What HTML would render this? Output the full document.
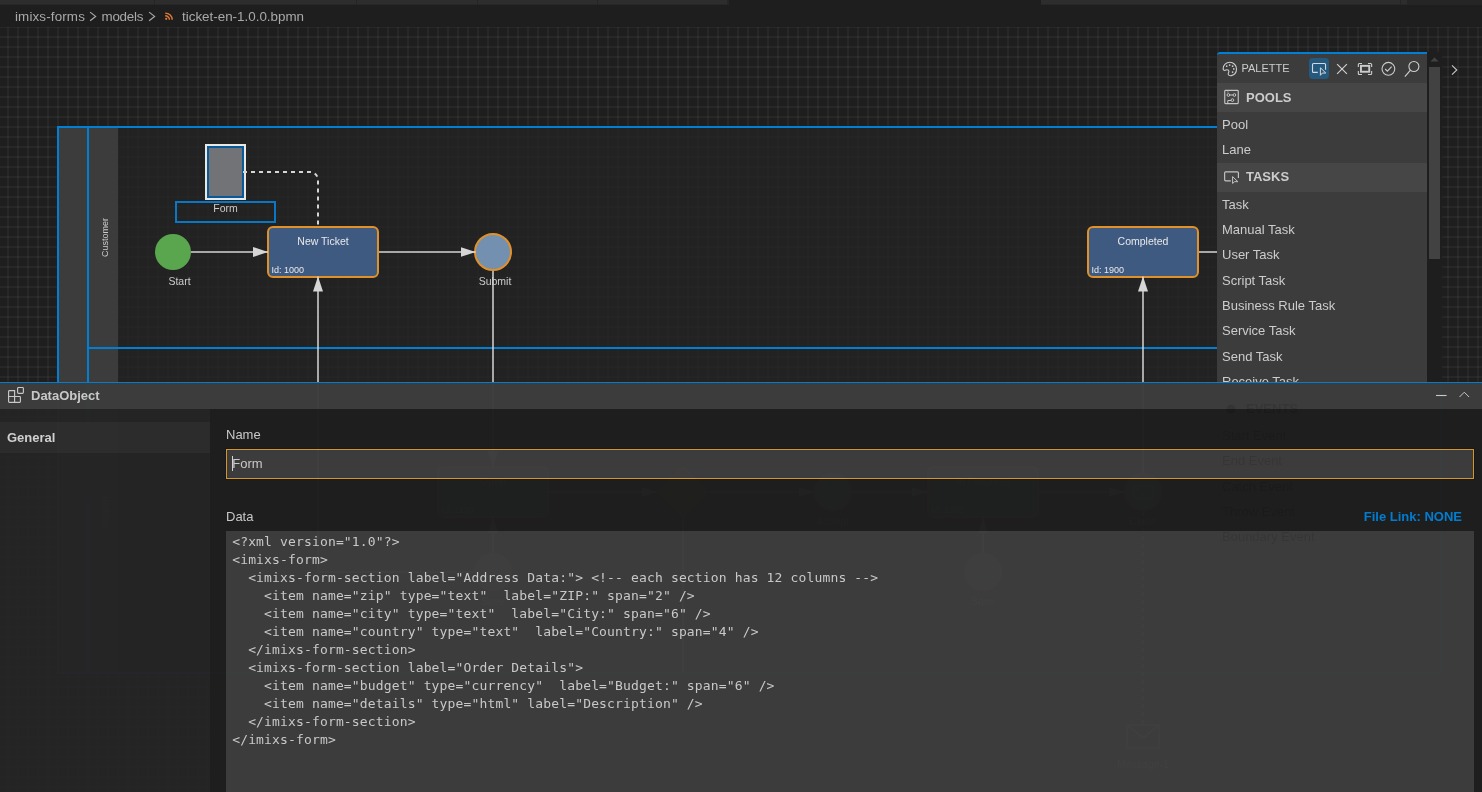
<!DOCTYPE html>
<html lang="en">
<head>
<meta charset="utf-8">
<title>ticket-en-1.0.0.bpmn</title>
<style>
html,body{margin:0;padding:0;}
body{width:1482px;height:792px;overflow:hidden;background:#1e1e1e;position:relative;font-family:"Liberation Sans",sans-serif;color:#cccccc;}
#root{position:absolute;left:0;top:0;width:1482px;height:792px;will-change:transform;}
.abs{position:absolute;}
/* top strip + breadcrumb */
#tabs{left:0;top:0;width:1482px;height:5px;background:linear-gradient(to bottom,#2d2d2d 4px,#272727 4px);}
#tabs i{position:absolute;top:0;height:5px;display:block;}
#crumbs{left:0;top:5px;width:1482px;height:22px;background:#1e1e1e;font-size:13.4px;color:#a9a9a9;white-space:nowrap;}
#crumbs span{position:absolute;top:1px;line-height:22px;}
/* canvas */
#canvas{left:0;top:27px;width:1482px;height:765px;overflow:hidden;background-color:#1e1e1e;
background-image:linear-gradient(to right,rgba(255,255,255,0.04) 2px,transparent 2px),linear-gradient(to bottom,rgba(255,255,255,0.04) 2px,transparent 2px);
background-size:10px 10px,10px 10px;background-position:7px 0px,0px -1px;}
#diagram{left:0;top:-27px;width:1482px;height:792px;}
/* palette */
#palette{left:1217px;top:52px;width:210px;height:330px;background:#3c3c3c;border-top:2px solid #007fd4;border-radius:3px 0 0 0;font-size:13px;color:#cccccc;overflow:hidden;}
#palette .hdr{height:29px;position:relative;}
#palette .grp{height:29px;background:#464646;position:relative;font-weight:bold;}
#palette .grp span{position:absolute;left:29px;top:0;line-height:30px;}
#palette .it{padding:6.02px 0 4.38px 5px;line-height:14.94px;height:14.94px;white-space:nowrap;}
#pghost{left:1217px;top:394.125px;width:210px;font-size:13px;color:#000;opacity:0.1;}
#pghost .grp{height:29px;position:relative;font-weight:bold;}
#pghost .grp span{position:absolute;left:29px;top:0;line-height:30px;}
#pghost .it{padding:6.02px 0 4.38px 5px;line-height:14.94px;height:14.94px;white-space:nowrap;}
#pscroll{left:1427px;top:52px;width:15px;height:330px;background:#1e1e1e;}
#pscroll .thumb{position:absolute;left:2px;top:15px;width:11px;height:192px;background:#424242;}
/* property panel */
#panel{left:0;top:382px;width:1482px;height:410px;background:#1e1e1e;opacity:0.98;border-top:1px solid #007fd4;box-sizing:border-box;}
#phead{left:0;top:0;width:1482px;height:26px;background:#3d3d3d;}
#phead .t{position:absolute;left:31px;top:0;line-height:25px;font-size:13px;font-weight:bold;color:#cccccc;}
#pside{left:0;top:26px;width:210px;height:383px;background:#252526;}
#ptab{left:0;top:39px;width:210px;height:31px;background:#2d2d2d;}
#ptab span{position:absolute;left:7px;top:0;line-height:32px;font-size:13px;font-weight:bold;color:#d4d4d4;}
.lbl{font-size:13px;color:#cccccc;line-height:15px;}
#inp{left:226px;top:66px;width:1248px;height:30px;box-sizing:border-box;border:1px solid #e09a12;background:#3d3d3d;box-shadow:0 0 0 1px rgba(8,16,40,0.4), inset 0 0 0 1px rgba(40,60,100,0.25);}
#inp span{position:absolute;left:5.3px;top:0;line-height:28px;font-size:13px;color:#cccccc;}
#ta{left:226px;top:148px;width:1248px;height:262px;background:#3d3d3d;overflow:hidden;}
#ta pre{margin:0;position:absolute;left:6.2px;top:2px;font-family:"DejaVu Sans Mono","Liberation Mono",monospace;font-size:13px;line-height:18px;color:#cccccc;letter-spacing:0.15px;}
#flink{right:20px;top:126px;font-size:13px;font-weight:bold;color:#007fd4;line-height:15px;}
</style>
</head>
<body>
<div id="root">
<!-- TOP -->
<div id="tabs" class="abs">
<i style="left:154px;width:1px;background:#252526"></i>
<i style="left:356px;width:1px;background:#252526"></i>
<i style="left:477px;width:1px;background:#252526"></i>
<i style="left:597px;width:1px;background:#252526"></i>
<i style="left:727px;width:2px;background:#252526"></i>
<i style="left:729px;width:312px;background:#1e1e1e"></i>
<i style="left:1400px;width:1px;background:#252526"></i>
<i style="left:1407px;width:75px;background:#252526"></i>
</div>
<div id="crumbs" class="abs">
<span style="left:15px;letter-spacing:0.14px">imixs-forms</span>
<span style="left:101.5px;letter-spacing:-0.25px">models</span>
<span style="left:182px">ticket-en-1.0.0.bpmn</span>
<svg class="abs" style="left:88px;top:5px" width="12" height="12" viewBox="0 0 12 12"><path d="M2.1 2.1 L7.6 6.4 L2.1 10.7" fill="none" stroke="#a9a9a9" stroke-width="1.2"/></svg>
<svg class="abs" style="left:147.1px;top:5px" width="12" height="12" viewBox="0 0 12 12"><path d="M2.1 2.1 L7.6 6.4 L2.1 10.7" fill="none" stroke="#a9a9a9" stroke-width="1.2"/></svg>
<svg class="abs" style="left:165px;top:7.4px" width="8.4" height="8" viewBox="0 0 9 9" preserveAspectRatio="none"><circle cx="1.3" cy="7.7" r="1.2" fill="#e37933"/><path d="M0.2 4.2 A4.6 4.6 0 0 1 4.8 8.8" fill="none" stroke="#e37933" stroke-width="1.5"/><path d="M0.2 1.2 A7.6 7.6 0 0 1 7.8 8.8" fill="none" stroke="#e37933" stroke-width="1.5"/></svg>
</div>

<!-- CANVAS -->
<div id="canvas" class="abs">
<svg id="diagram" class="abs" width="1482" height="792" viewBox="0 0 1482 792" font-family="Liberation Sans, sans-serif">
<defs>
<marker id="ah" markerWidth="16" markerHeight="12" refX="15" refY="5" orient="auto" markerUnits="userSpaceOnUse"><path d="M0 0 L15 5 L0 10 Z" fill="#d6d6d6"/></marker>
</defs>
<!-- pool -->
<rect x="59" y="128" width="1381" height="300" fill="#242424" fill-opacity="0.75"/>
<rect x="59" y="128" width="28" height="300" fill="#3c3c3c"/>
<rect x="89" y="128" width="29" height="300" fill="#3c3c3c"/>
<rect x="58" y="127" width="1383" height="546" fill="none" stroke="#007fd4" stroke-width="2"/>
<line x1="88" y1="127" x2="88" y2="500" stroke="#007fd4" stroke-width="2"/>
<line x1="88" y1="348" x2="1441" y2="348" stroke="#007fd4" stroke-width="2"/>
<text transform="translate(108,237.5) rotate(-90)" text-anchor="middle" font-size="9" fill="#cccccc">Customer</text>
<!-- association -->
<path d="M243 172 H310 A8 8 0 0 1 318 180 V226" fill="none" stroke="#d6d6d6" stroke-width="2" stroke-dasharray="4 4"/>
<!-- data object -->
<rect x="206" y="145" width="39" height="54" fill="none" stroke="#ebe7e3" stroke-width="2"/>
<rect x="208" y="147" width="35" height="50" fill="#727377" stroke="#06599a" stroke-width="2"/>
<path d="M243 172 H247" fill="none" stroke="#d6d6d6" stroke-width="2"/>
<rect x="176" y="202" width="99" height="20" fill="none" stroke="#0877c6" stroke-width="2"/>
<text x="225.5" y="212.2" text-anchor="middle" font-size="10.5" fill="#cccccc">Form</text>
<!-- start -->
<circle cx="173" cy="252" r="18" fill="#5aa64e"/>
<text x="179.5" y="285" text-anchor="middle" font-size="10.5" fill="#cccccc">Start</text>
<!-- tasks -->
<rect x="268" y="227" width="110" height="50" rx="5" ry="5" fill="#3f5a80" stroke="#e0912a" stroke-width="2"/>
<text x="323" y="245" text-anchor="middle" font-size="10.5" fill="#e8e8e8">New Ticket</text>
<text x="271.5" y="273" font-size="9" fill="#e8e8e8">Id: 1000</text>
<rect x="1088" y="227" width="110" height="50" rx="5" ry="5" fill="#3f5a80" stroke="#e0912a" stroke-width="2"/>
<text x="1143" y="244.7" text-anchor="middle" font-size="10.5" fill="#e8e8e8">Completed</text>
<text x="1091.5" y="272.8" font-size="9" fill="#e8e8e8">Id: 1900</text>
<!-- submit event -->
<circle cx="493" cy="252" r="18" fill="#7490b0" stroke="#e0912a" stroke-width="2"/>
<text x="495" y="285" text-anchor="middle" font-size="10.5" fill="#cccccc">Submit</text>

<!-- lower part of the diagram (behind the property panel) -->
<rect x="59" y="428" width="1381" height="244" fill="#242424" fill-opacity="0.75"/>
<rect x="59" y="428" width="28" height="244" fill="#3c3c3c"/>
<rect x="89" y="428" width="29" height="244" fill="#3c3c3c"/>
<line x1="88" y1="500" x2="88" y2="673" stroke="#007fd4" stroke-width="2"/>
<text transform="translate(108,512) rotate(-90)" text-anchor="middle" font-size="9" fill="#cccccc">Support</text>
<rect x="438" y="467" width="110" height="50" rx="5" ry="5" fill="#3f5a80" stroke="#e0912a" stroke-width="2"/>
<text x="493" y="485" text-anchor="middle" font-size="10.5" fill="#e8e8e8">Open</text>
<text x="441.5" y="513" font-size="9" fill="#e8e8e8">Id: 1100</text>
<rect x="928" y="467" width="110" height="50" rx="5" ry="5" fill="#3f5a80" stroke="#e0912a" stroke-width="2"/>
<text x="983" y="485" text-anchor="middle" font-size="10.5" fill="#e8e8e8">In Progress</text>
<text x="931.5" y="513" font-size="9" fill="#e8e8e8">Id: 1200</text>
<path d="M683 467 L708 492 L683 517 L658 492 Z" fill="#7a6236" stroke="#a8722a" stroke-width="2"/>
<circle cx="833" cy="492" r="18" fill="#7490b0" stroke="#e0912a" stroke-width="2"/>
<text x="833" y="524.5" text-anchor="middle" font-size="10.5" fill="#cccccc">Accept</text>
<circle cx="1143" cy="492" r="18" fill="#7490b0" stroke="#e0912a" stroke-width="2"/>
<path d="M1133 486 H1153 V499 H1133 Z M1133 486 L1143 494 L1153 486" fill="none" stroke="#e8e8e8" stroke-width="1.2"/>
<text x="1143" y="524.5" text-anchor="middle" font-size="10.5" fill="#cccccc">Close</text>
<circle cx="493" cy="572" r="18" fill="#7490b0" stroke="#e0912a" stroke-width="2"/>
<text x="493" y="605" text-anchor="middle" font-size="10.5" fill="#cccccc">Save</text>
<circle cx="983" cy="572" r="18" fill="#7490b0" stroke="#e0912a" stroke-width="2"/>
<text x="983" y="605" text-anchor="middle" font-size="10.5" fill="#cccccc">Save</text>
<path d="M1127 725 H1159 V748 H1127 Z M1127 725 L1143 738 L1159 725" fill="none" stroke="#cccccc" stroke-width="1.5"/>
<text x="1143" y="768" text-anchor="middle" font-size="10.5" fill="#cccccc">Message-1</text>
<g stroke="#d6d6d6" stroke-width="1.5" fill="none">
<line x1="549" y1="492" x2="657" y2="492" marker-end="url(#ah)"/>
<line x1="709" y1="492" x2="814" y2="492" marker-end="url(#ah)"/>
<line x1="852" y1="492" x2="927" y2="492" marker-end="url(#ah)"/>
<line x1="1039" y1="492" x2="1124" y2="492" marker-end="url(#ah)"/>
<line x1="493" y1="553" x2="493" y2="518" marker-end="url(#ah)"/>
<line x1="983" y1="553" x2="983" y2="518" marker-end="url(#ah)"/>
<path d="M474 572 H318"/>
<line x1="683" y1="518" x2="683" y2="672"/>
<line x1="1143" y1="724" x2="1143" y2="511" stroke-dasharray="4 4"/>
</g>
<!-- sequence flows -->
<g stroke="#d6d6d6" stroke-width="1.5" fill="none">
<line x1="191" y1="252" x2="268" y2="252" marker-end="url(#ah)"/>
<line x1="379" y1="252" x2="475.6" y2="252" marker-end="url(#ah)"/>
<line x1="318" y1="572" x2="318" y2="276.5" marker-end="url(#ah)"/>
<line x1="493" y1="271" x2="493" y2="466" marker-end="url(#ah)"/>
<line x1="1143" y1="474" x2="1143" y2="276.5" marker-end="url(#ah)"/>
<line x1="1199" y1="252" x2="1230" y2="252"/>
</g>
</svg>
</div>

<!-- PALETTE -->
<div id="palette" class="abs">
<div class="hdr">
<!-- palette icon -->
<svg class="abs" style="left:5px;top:7px" width="16" height="16" viewBox="0 0 16 16"><path d="M7.8 1.3 C11.5 1.3 14.5 4.3 14.5 8 C14.5 11.3 12.3 13.9 9.3 14.6 C7.6 15 6.2 14.2 6.2 12.8 C6.2 11.9 6.9 11.3 6.9 10.3 C6.9 9.3 6.1 8.7 5.1 8.7 C4.2 8.7 3.6 9.5 2.7 9.5 C1.8 9.5 1.15 8.7 1.15 7.6 C1.15 4.1 4.1 1.3 7.8 1.3 Z" fill="none" stroke="#cccccc" stroke-width="1.1"/><g fill="#cccccc"><circle cx="4.7" cy="5.2" r="0.85"/><circle cx="7.66" cy="4.03" r="0.85"/><circle cx="10.6" cy="5.2" r="0.85"/><circle cx="11.76" cy="7.97" r="0.85"/><circle cx="10.6" cy="11.1" r="0.85"/></g></svg>
<span class="abs" style="left:24.5px;top:0;line-height:29px;font-size:11px;color:#cccccc">PALETTE</span>
<!-- selected tool -->
<div class="abs" style="left:92px;top:4px;width:20px;height:21px;border-radius:4px;background:#255a80"></div>
<svg class="abs" style="left:94px;top:7px" width="16" height="16" viewBox="0 0 16 16"><path d="M6.8 11.4 H2.5 Q1.5 11.4 1.5 10.4 V3.5 Q1.5 2.5 2.5 2.5 H13.55 Q14.55 2.5 14.55 3.5 V8.7" fill="none" stroke="#d8d8d8" stroke-width="1.1"/><path d="M9.4 6.8 V14.3 L11.3 12.1 L14.8 12 Z" fill="none" stroke="#d8d8d8" stroke-width="1" stroke-linejoin="round"/></svg>
<!-- close -->
<svg class="abs" style="left:117px;top:7px" width="16" height="16" viewBox="0 0 16 16"><path d="M3.1 3.1 L12.9 12.9 M12.9 3.1 L3.1 12.9" stroke="#cccccc" stroke-width="1.2" fill="none"/></svg>
<!-- fit -->
<svg class="abs" style="left:140px;top:7px" width="16" height="16" viewBox="0 0 16 16"><path d="M1.35 6 V3.55 Q1.35 2.55 2.35 2.55 H5 M11 2.55 H13.65 Q14.65 2.55 14.65 3.55 V6 M14.65 10.1 V12.55 Q14.65 13.55 13.65 13.55 H11 M5 13.55 H2.35 Q1.35 13.55 1.35 12.55 V10.1" fill="none" stroke="#cccccc" stroke-width="1.1"/><rect x="3.95" y="4.85" width="8.3" height="5.9" fill="none" stroke="#cccccc" stroke-width="1.9"/></svg>
<!-- check -->
<svg class="abs" style="left:163px;top:7px" width="16" height="16" viewBox="0 0 16 16"><circle cx="8.4" cy="7.8" r="6.4" fill="none" stroke="#cccccc" stroke-width="1.1"/><path d="M5.2 8 L7.4 10.2 L11.6 5.6" fill="none" stroke="#cccccc" stroke-width="1.1"/></svg>
<!-- search -->
<svg class="abs" style="left:186px;top:6px" width="18" height="18" viewBox="0 0 18 18"><circle cx="10.9" cy="6.5" r="5" fill="none" stroke="#cccccc" stroke-width="1.1"/><path d="M7.5 10.2 L1.9 16.6" stroke="#cccccc" stroke-width="1.2" fill="none"/></svg>
</div>
<div class="grp">
<svg class="abs" style="left:6px;top:6px" width="16" height="16" viewBox="0 0 16 16"><rect x="1.75" y="1.35" width="13.5" height="13.2" rx="0.8" fill="none" stroke="#c4c4c4" stroke-width="1.15"/><circle cx="5.4" cy="6" r="1.35" fill="none" stroke="#c4c4c4" stroke-width="1"/><circle cx="11.4" cy="6" r="1.35" fill="none" stroke="#c4c4c4" stroke-width="1"/><circle cx="9.4" cy="11.1" r="1.35" fill="none" stroke="#c4c4c4" stroke-width="1"/><path d="M6.8 6 H10 M8 11.5 H4.8 V14" fill="none" stroke="#c4c4c4" stroke-width="1"/><path d="M4.9 2 V4.4" fill="none" stroke="#8a8a8a" stroke-width="1"/></svg>
<span>POOLS</span></div>
<div class="it">Pool</div>
<div class="it">Lane</div>
<div class="grp">
<svg class="abs" style="left:6px;top:7px" width="17" height="16" viewBox="0 0 17 16"><path d="M7.8 10.85 H2.65 Q1.65 10.85 1.65 9.85 V2.8 Q1.65 1.8 2.65 1.8 H14.4 Q15.4 1.8 15.4 2.8 V8.1" fill="none" stroke="#c4c4c4" stroke-width="1.15"/><path d="M9.6 6.6 V13.5 L11.5 11.7 H14.9 Z" fill="none" stroke="#c4c4c4" stroke-width="1" stroke-linejoin="round"/></svg>
<span style="top:-1px">TASKS</span></div>
<div class="it">Task</div>
<div class="it">Manual Task</div>
<div class="it">User Task</div>
<div class="it">Script Task</div>
<div class="it">Business Rule Task</div>
<div class="it">Service Task</div>
<div class="it">Send Task</div>
<div class="it">Receive Task</div>

</div>
<div id="pscroll" class="abs"><div class="thumb"></div>
<svg class="abs" style="left:3px;top:5.3px" width="9" height="5" viewBox="0 0 9 5"><path d="M0.5 4.5 L4.5 0.3 L8.5 4.5 Z" fill="#424242"/></svg>
</div>
<svg class="abs" style="left:1448px;top:63px" width="12" height="14" viewBox="0 0 12 14"><path d="M4 2.3 L8.8 7 L4 11.7" fill="none" stroke="#c5c5c5" stroke-width="1.1"/></svg>

<!-- PANEL -->
<div id="panel" class="abs">
<div id="pside" class="abs"></div>
<div id="ptab" class="abs"><span>General</span></div>
<div id="phead" class="abs">
<svg class="abs" style="left:7px;top:4px" width="18" height="18" viewBox="0 0 18 18"><path d="M1.6 9.5 V4.4 Q1.6 3.6 2.4 3.6 H7.6 V9.5 H12.6 Q13.4 9.5 13.4 10.3 V14.6 Q13.4 15.4 12.6 15.4 H2.4 Q1.6 15.4 1.6 14.6 Z M1.6 9.5 H7.6 V15.4" fill="none" stroke="#cccccc" stroke-width="1.15"/><rect x="10.6" y="0.5" width="5.8" height="5.9" rx="1.1" fill="none" stroke="#cccccc" stroke-width="1.15"/></svg>
<span class="t">DataObject</span>
<svg class="abs" style="left:1434px;top:6px" width="14" height="14" viewBox="0 0 14 14"><path d="M2 6.5 H12.6" stroke="#cccccc" stroke-width="1.1"/></svg>
<svg class="abs" style="left:1457px;top:5px" width="14" height="14" viewBox="0 0 14 14"><path d="M2.5 9 L7.3 4.2 L12.1 9" fill="none" stroke="#cccccc" stroke-width="1"/></svg>
</div>
<div class="abs lbl" style="left:226px;top:43.5px">Name</div>
<div id="inp" class="abs"><span>Form</span><i class="abs" style="left:5px;top:6px;width:1px;height:15px;background:#d8d8d8;display:block"></i></div>
<div class="abs lbl" style="left:226px;top:125.5px">Data</div>
<div id="flink" class="abs">File Link: NONE</div>
<div id="ta" class="abs"><pre>&lt;?xml version="1.0"?&gt;
&lt;imixs-form&gt;
  &lt;imixs-form-section label="Address Data:"&gt; &lt;!-- each section has 12 columns --&gt;
    &lt;item name="zip" type="text"  label="ZIP:" span="2" /&gt;
    &lt;item name="city" type="text"  label="City:" span="6" /&gt;
    &lt;item name="country" type="text"  label="Country:" span="4" /&gt;
  &lt;/imixs-form-section&gt;
  &lt;imixs-form-section label="Order Details"&gt;
    &lt;item name="budget" type="currency"  label="Budget:" span="6" /&gt;
    &lt;item name="details" type="html" label="Description" /&gt;
  &lt;/imixs-form-section&gt;
&lt;/imixs-form&gt;</pre></div>

</div>
<!-- faint remainder of the palette shining through the panel -->
<div id="pghost" class="abs">
<div class="grp"><svg class="abs" style="left:8px;top:9px" width="12" height="12" viewBox="0 0 12 12"><circle cx="6" cy="6" r="4.5" fill="#000000"/></svg><span>EVENTS</span></div>
<div class="it">Start Event</div>
<div class="it">End Event</div>
<div class="it">Catch Event</div>
<div class="it">Throw Event</div>
<div class="it">Boundary Event</div>
</div>
</div>
</body>
</html>
